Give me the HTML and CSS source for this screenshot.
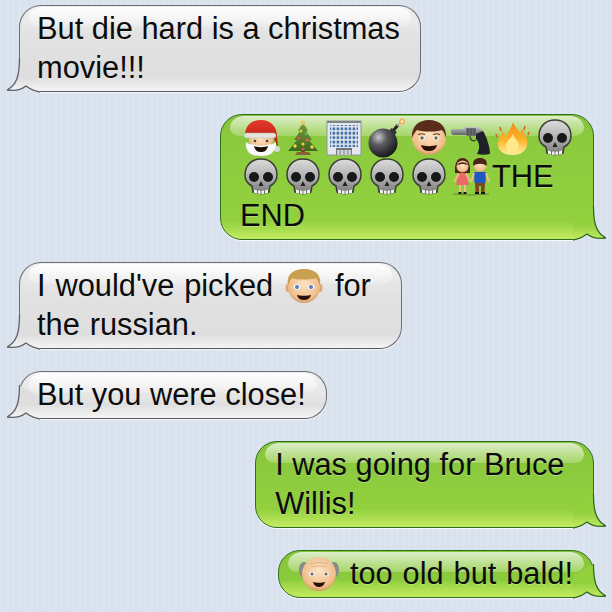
FILE: index.html
```html
<!DOCTYPE html>
<html lang="en">
<head>
    <meta charset="UTF-8">
    <title>Messages</title>
    <link rel="stylesheet" href="styles.css">
</head>
<body>
    <!-- shared gradients and emoji drawings -->
    <svg class="sprite" xmlns="http://www.w3.org/2000/svg">
        <defs>
            <linearGradient id="tailGray" x1="0" y1="0" x2="0" y2="1"><stop offset="0" stop-color="#dedede"/><stop offset=".58" stop-color="#dedede"/><stop offset="1" stop-color="#f6f6f6"/></linearGradient>
            <linearGradient id="tailGreen" x1="0" y1="0" x2="0" y2="1"><stop offset="0" stop-color="#92d03e"/><stop offset=".55" stop-color="#92d03e"/><stop offset="1" stop-color="#c4ec62"/></linearGradient>
            <linearGradient id="bone" x1="0" y1="0" x2="0" y2="1"><stop offset="0" stop-color="#dcdcdc"/><stop offset=".6" stop-color="#aaa"/><stop offset="1" stop-color="#777"/></linearGradient>
            <radialGradient id="skin" cx=".5" cy=".4" r=".65"><stop offset="0" stop-color="#fde3c4"/><stop offset=".75" stop-color="#f0bd8a"/><stop offset="1" stop-color="#c98a52"/></radialGradient>
            <radialGradient id="steel" cx=".35" cy=".3" r=".8"><stop offset="0" stop-color="#c8c8cc"/><stop offset=".35" stop-color="#5a5a60"/><stop offset="1" stop-color="#0c0c0e"/></radialGradient>
            <linearGradient id="flame" x1="0" y1="0" x2="0" y2="1"><stop offset="0" stop-color="#f08a1a"/><stop offset=".55" stop-color="#fbb62c"/><stop offset="1" stop-color="#fff0a0"/></linearGradient>
            <linearGradient id="hatRed" x1="0" y1="0" x2="0" y2="1"><stop offset="0" stop-color="#e8382c"/><stop offset="1" stop-color="#a81810"/></linearGradient>
            <linearGradient id="pine" x1="0" y1="0" x2="0" y2="1"><stop offset="0" stop-color="#7a9a3c"/><stop offset="1" stop-color="#3c6a22"/></linearGradient>
            <linearGradient id="barrel" x1="0" y1="0" x2="0" y2="1"><stop offset="0" stop-color="#c4c6c8"/><stop offset="1" stop-color="#55585c"/></linearGradient>
            <pattern id="windows" width="4" height="4.4" patternUnits="userSpaceOnUse"><rect width="4" height="4.4" fill="#e4e8ec"/><rect x=".6" y=".6" width="2.6" height="2.8" fill="#3f6ea8"/></pattern>

            <symbol id="tail-gray" viewBox="0 0 33 43">
                <path d="M12.500 8C12.500 25 10 35 0 40C7 41 14 40 19 36C23 39 27 41 33 42L33 20Z" fill="url(#tailGray)"/>
                <path d="M12.500 8C12.500 25 10 35 0 40C7 41 14 40 19 36C23 39 27 41 33 42" fill="none" stroke="#5f6268" stroke-width="1.300"/>
            </symbol>
            <symbol id="tail-green" viewBox="0 0 33 43">
                <path d="M12.500 8C12.500 25 10 35 0 40C7 41 14 40 19 36C23 39 27 41 33 42L33 20Z" fill="url(#tailGreen)"/>
                <path d="M12.500 8C12.500 25 10 35 0 40C7 41 14 40 19 36C23 39 27 41 33 42" fill="none" stroke="#2f6e22" stroke-width="1.300"/>
            </symbol>

            <symbol id="santa" viewBox="0 0 42 40">
                <path d="M6 26C6 36 13 38 21 38C29 38 35 36 35 26Z" fill="#fbfbfb" stroke="#c8c8c8" stroke-width=".6"/>
                <circle cx="21" cy="22" r="12" fill="url(#skin)"/>
                <path d="M5 18C5 7 12 2 21 2C31 2 37 9 37 18L38 30L33 18Z" fill="url(#hatRed)"/>
                <circle cx="37" cy="31" r="3" fill="#d8d8d8"/>
                <rect x="4" y="15" width="32" height="5" rx="2.500" fill="#e4e2dc" stroke="#b4b0a8" stroke-width=".5"/>
                <circle cx="15" cy="23" r="1.300" fill="#444"/>
                <circle cx="27" cy="23" r="1.300" fill="#444"/>
                <path d="M6 24C9 27 12 26 15 27C18 28 24 28 27 27C30 26 33 27 36 24C37 33 30 37 21 37C12 37 5 33 6 24Z" fill="#fafafa"/>
                <path d="M14 28C17 29.500 25 29.500 28 28C27 33 24 34 21 34C18 34 15 33 14 28Z" fill="#1c1008"/>
            </symbol>

            <symbol id="tree" viewBox="0 0 42 40">
                <rect x="19" y="32" width="4" height="4" fill="#6a4020"/>
                <path d="M13 37H29L27 34H15Z" fill="#8a6234"/>
                <path d="M21 4L26 13L24 13L30 22L27 22L36 33H6L15 22L12 22L18 13L16 13Z" fill="url(#pine)"/>
                <path d="M21 1L22 3.500L24.500 4L22.500 5.500L23 8L21 6.500L19 8L19.500 5.500L17.500 4L20 3.500Z" fill="#e8c860"/>
                <circle cx="19" cy="13" r="1.400" fill="#e8d040"/><circle cx="24" cy="16" r="1.500" fill="#50b868"/>
                <circle cx="17" cy="20" r="1.600" fill="#e05040"/><circle cx="25" cy="22" r="1.700" fill="#e86050"/>
                <circle cx="13" cy="28" r="1.700" fill="#f0d838"/><circle cx="21" cy="26" r="1.600" fill="#f0d838"/>
                <circle cx="30" cy="29" r="1.800" fill="#f0d838"/><circle cx="21" cy="31" r="1.500" fill="#e05040"/>
            </symbol>

            <symbol id="building" viewBox="0 0 42 40">
                <rect x="3" y="3" width="34" height="34" fill="#e4e8ec" stroke="#8e959c" stroke-width="1"/>
                <rect x="3" y="3" width="34" height="2" fill="#7d858c"/>
                <rect x="6" y="7" width="28" height="22" fill="url(#windows)"/>
                <rect x="12" y="30" width="16" height="7" fill="#70767c"/>
                <rect x="13" y="32" width="14" height="5" fill="#cfd3d6"/>
                <path d="M16 32V37M20 32V37M24 32V37" stroke="#70767c" stroke-width=".8"/>
            </symbol>

            <symbol id="bomb" viewBox="0 0 42 40">
                <path d="M26 14L32 7" stroke="#222" stroke-width="3"/>
                <path d="M31 8L35 4" stroke="#c8b090" stroke-width="1.200"/>
                <circle cx="36" cy="3.500" r="3" fill="#f2b060"/><circle cx="36" cy="3.500" r="1.300" fill="#fff2d0"/>
                <rect x="23" y="11" width="7" height="6" rx="1" transform="rotate(35 26 14)" fill="#333"/>
                <circle cx="17" cy="25" r="14.500" fill="url(#steel)"/>
            </symbol>

            <symbol id="boy" viewBox="0 0 42 40">
                <circle cx="21" cy="20" r="17" fill="url(#skin)"/>
                <path d="M4 20C3 8 11 2 21 2C31 2 39 8 38 20C37 17 36 14 34 12C28 14 16 14 9 12C7 14 5 17 4 20Z" fill="#5a2c1c"/>
                <ellipse cx="14" cy="20" rx="3" ry="2.500" fill="#f4f4ee"/><circle cx="14" cy="20" r="1.700" fill="#6a6a5a"/>
                <ellipse cx="28" cy="20" rx="3" ry="2.500" fill="#f4f4ee"/><circle cx="28" cy="20" r="1.700" fill="#6a6a5a"/>
                <path d="M10 16.500Q14 15 17 16.500M25 16.500Q28 15 32 16.500" fill="none" stroke="#5a2c1c" stroke-width="1"/>
                <path d="M13 27C17 28.500 25 28.500 29 27C28 32 24 33 21 33C18 33 14 32 13 27Z" fill="#2a1008"/>
            </symbol>

            <symbol id="gun" viewBox="0 0 42 40">
                <path d="M1 12L3 11H14V9H28L32 12L34 16L23 18L16 17H3L1 15Z" fill="url(#barrel)"/>
                <rect x="16" y="10" width="10" height="8" rx="1" fill="#6c7074"/>
                <path d="M18 11V17M21 11V17M24 11V17" stroke="#3a3c40" stroke-width=".8"/>
                <path d="M26 16L33 13C36 18 40 28 40 36C36 37 31 37 27 36C30 31 30 25 26 21Z" fill="#1e2228"/>
                <path d="M20 18C20 22 23 24 26 22" fill="none" stroke="#3a3c40" stroke-width="1.200"/>
            </symbol>

            <symbol id="fire" viewBox="0 0 42 40">
                <path d="M21 4C23 9 26 11 28 15L30 11C33 16 36 20 35 27C34 33 29 37 21 37C12 37 6 33 6 26C6 21 9 17 11 13L14 18C16 13 20 10 21 4Z" fill="url(#flame)"/>
                <path d="M21 16C22 20 26 22 27 27C27 32 25 35 21 35C16 35 14 32 14 28C14 23 19 21 21 16Z" fill="#ffe98a"/>
                <path d="M8 9L9 13M33 8L32 12M4 16L5 19M37 14L36 17" stroke="#d8641a" stroke-width="1.500"/>
            </symbol>

            <symbol id="skull" viewBox="0 0 42 40">
                <path d="M21 2C31 2 37 9 37 18C37 24 34 27 30 29L29 35Q21 38 13 35L12 29C8 27 5 24 5 18C5 9 11 2 21 2Z" fill="url(#bone)" stroke="#3a3f36" stroke-width="1.500"/>
                <circle cx="14" cy="20" r="5" fill="#17181a"/>
                <circle cx="28" cy="20" r="5" fill="#17181a"/>
                <path d="M21 24L23.500 29H18.500Z" fill="#222"/>
                <path d="M14 32.500Q21 35 28 32.500L28 36Q21 38 14 36Z" fill="#f0f0ec"/>
                <path d="M17.500 33V37M21 33.500V37.500M24.500 33V37" stroke="#555" stroke-width=".8"/>
            </symbol>

            <symbol id="couple" viewBox="0 0 42 40">
                <path d="M3 37Q21 39 39 37" stroke="#5c8a2c" stroke-width="1" fill="none"/>
                <path d="M5 12C5 4 9 1 12.500 1C16 1 20 4 20 12V16H5Z" fill="#4a2416"/>
                <circle cx="12.500" cy="9.500" r="6" fill="url(#skin)"/>
                <path d="M7 8.500C8 4 17 4 18 8.500C15 6.500 10 6.500 7 8.500Z" fill="#4a2416"/>
                <path d="M9 16H16L19 28H6Z" fill="#ea6a6a"/>
                <path d="M9 17L4 25M16 17L21 25" stroke="#f0bd8a" stroke-width="1.800"/>
                <path d="M10 28V35M15 28V35" stroke="#f0bd8a" stroke-width="2"/>
                <path d="M8.500 36H11.500M13.500 36H16.500" stroke="#111" stroke-width="2"/>
                <circle cx="30" cy="8.500" r="6.500" fill="url(#skin)"/>
                <path d="M23.500 9C22 3 26 1 30 1C34 1 38 3 36.500 9C34 6 26 6 23.500 9Z" fill="#4a2416"/>
                <path d="M24 15H36L35.500 26H24.500Z" fill="#1e58c0"/>
                <path d="M24 16L21 25M36 16L39 25" stroke="#f0bd8a" stroke-width="2"/>
                <path d="M25 26H35L34.500 35H31V29H29V35H25.500Z" fill="#7a4a1c"/>
                <path d="M25 36H29M31 36H35" stroke="#111" stroke-width="2"/>
            </symbol>

            <symbol id="blond" viewBox="0 0 42 40">
                <ellipse cx="5" cy="22" rx="2.500" ry="4" fill="#e0a870"/><ellipse cx="37" cy="22" rx="2.500" ry="4" fill="#e0a870"/>
                <circle cx="21" cy="21" r="16" fill="url(#skin)"/>
                <path d="M5 20C3 8 11 3 21 3C31 3 39 8 37 20C36 17 35 14 33 12C27 14 14 14 9 12C7 14 6 17 5 20Z" fill="#c8a050"/>
                <ellipse cx="14" cy="21" rx="3.500" ry="2.800" fill="#f6f6f2"/><circle cx="14" cy="21" r="2" fill="#5a80b8"/>
                <ellipse cx="28" cy="21" rx="3.500" ry="2.800" fill="#f6f6f2"/><circle cx="28" cy="21" r="2" fill="#5a80b8"/>
                <path d="M14 29C17 30 25 30 28 29C27 33 24 34 21 34C18 34 15 33 14 29Z" fill="#2a1008"/>
            </symbol>

            <symbol id="oldman" viewBox="0 0 42 40">
                <ellipse cx="6" cy="16" rx="5" ry="8" fill="#8a8a88"/><ellipse cx="36" cy="16" rx="5" ry="8" fill="#8a8a88"/>
                <circle cx="21" cy="20" r="17" fill="url(#skin)"/>
                <path d="M12 10Q21 7 30 10M13 13Q21 10.500 29 13" fill="none" stroke="#d8a880" stroke-width=".8"/>
                <ellipse cx="14" cy="20" rx="3" ry="2.300" fill="#eee"/><circle cx="14" cy="20" r="1.500" fill="#6a6a5a"/>
                <ellipse cx="28" cy="20" rx="3" ry="2.300" fill="#eee"/><circle cx="28" cy="20" r="1.500" fill="#6a6a5a"/>
                <path d="M15 28C18 29 24 29 27 28C26 32 23 33 21 33C19 33 16 32 15 28Z" fill="#2a1008"/>
            </symbol>
        </defs>
    </svg>

    <div class="thread">
        <div class="bubble them">
            <svg class="tail"><use href="#tail-gray"/></svg>
            <p>But die hard is a christmas<br>movie!!!</p>
        </div>

        <div class="bubble me album">
            <svg class="tail"><use href="#tail-green"/></svg>
            <p><svg class="emoji"><use href="#santa"/></svg><svg class="emoji"><use href="#tree"/></svg><svg class="emoji"><use href="#building"/></svg><svg class="emoji"><use href="#bomb"/></svg><svg class="emoji"><use href="#boy"/></svg><svg class="emoji"><use href="#gun"/></svg><svg class="emoji"><use href="#fire"/></svg><svg class="emoji"><use href="#skull"/></svg><br><svg class="emoji"><use href="#skull"/></svg><svg class="emoji"><use href="#skull"/></svg><svg class="emoji"><use href="#skull"/></svg><svg class="emoji"><use href="#skull"/></svg><svg class="emoji"><use href="#skull"/></svg><svg class="emoji"><use href="#couple"/></svg>THE<br>END</p>
        </div>

        <div class="bubble them">
            <svg class="tail"><use href="#tail-gray"/></svg>
            <p class="wide-words">I would've picked <svg class="emoji"><use href="#blond"/></svg> for&nbsp;<br>the russian.</p>
        </div>

        <div class="bubble them">
            <svg class="tail"><use href="#tail-gray"/></svg>
            <p>But you were close!</p>
        </div>

        <div class="bubble me">
            <svg class="tail"><use href="#tail-green"/></svg>
            <p>I was going for Bruce&nbsp;<br>Willis!</p>
        </div>

        <div class="bubble me">
            <svg class="tail"><use href="#tail-green"/></svg>
            <p class="wide-words"><svg class="emoji"><use href="#oldman"/></svg> too old but bald!</p>
        </div>
    </div>
</body>
</html>
```

FILE: styles.css
```css
body {
    margin: 0;
    height: 612px;
    overflow: hidden;
    background-color: #dbe3ef;
    background-image: repeating-linear-gradient(90deg, rgba(255,255,255,0.04) 0 3px, rgba(120,140,170,0.02) 3px 6px);
    font-family: "Liberation Sans", Arial, sans-serif;
}
.sprite { display: block; width: 0; height: 0; }
.thread { display: flex; flex-direction: column; gap: 22px; padding: 5px 18px 0 19px; }

.bubble {
    position: relative;
    width: fit-content;
    box-sizing: border-box;
    padding: 3px 20px 4px 17px;
    border: 1px solid #6b6e74;
    border-bottom-color: #55585e;
    border-radius: 22px;
    box-shadow: 0 1px 1px rgba(255,255,255,0.8);
}
/* gloss across the top of the bubble */
.bubble::before {
    content: "";
    position: absolute;
    top: 1px;
    left: 9px;
    right: 9px;
    height: 20px;
    border-radius: 14px 14px 10px 10px / 12px 12px 8px 8px;
}
.bubble p {
    position: relative;
    margin: 0;
    font-size: 30.8px;
    line-height: 39px;
    color: #0c0c0c;
    text-shadow: 0 1px 0 rgba(255,255,255,0.3);
}
.bubble p.wide-words { word-spacing: 1.3px; }

.them {
    background: linear-gradient(#f0f0f0 0, #e2e2e2 30px, #dedede calc(100% - 14px), #f4f4f4 100%);
}
.them::before { background: linear-gradient(rgba(255,255,255,0.95), rgba(255,255,255,0.15)); }
.me {
    align-self: flex-end;
    padding-left: 19px;
    border-color: #2f6e22;
    background: linear-gradient(#86c43a 0, #8ccb3e 30px, #92d03e calc(100% - 18px), #c4ec62 100%);
}
.me::before { background: linear-gradient(rgba(235,245,225,0.85), rgba(215,238,180,0.35)); }
.album { padding-right: 17px; }

.tail { position: absolute; left: -13px; bottom: -2px; width: 33px; height: 43px; }
.me .tail { left: auto; right: -13px; transform: scaleX(-1); }

.emoji { width: 42px; height: 40px; margin: -8px 0; vertical-align: -1.5px; }
```
